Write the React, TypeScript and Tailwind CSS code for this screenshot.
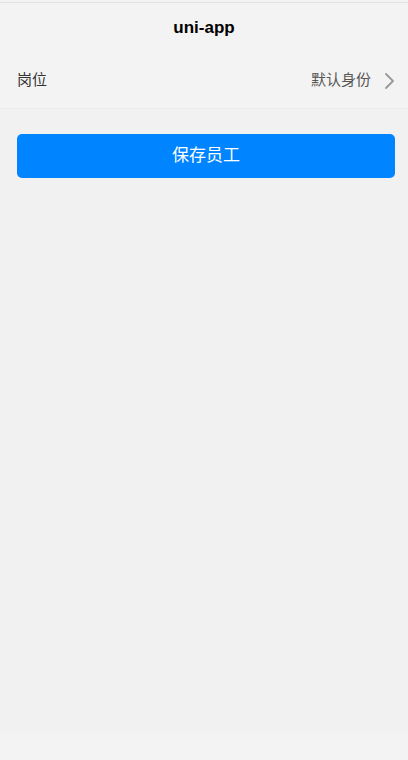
export default function App() {
  return (
    <div
      className="w-[408px] h-[760px] flex flex-col bg-[#f1f1f1]"
      style={{ fontFamily: '"Liberation Sans", "Noto Sans CJK SC", sans-serif' }}
    >
      <div className="h-[3px] border-b border-[#e2e2e2] bg-[#f3f3f3]" />
      <header className="h-[50px] flex items-center justify-center bg-[#f3f3f3]">
        <span className="text-[17px] font-bold text-black">uni-app</span>
      </header>

      <div className="flex items-center justify-between h-[56px] pl-[17px] pr-[14px] border-b border-[#ececec] bg-[#f3f3f3]">
        <span className="text-[15px] text-[#333]">岗位</span>
        <div className="flex items-center gap-[14px]">
          <span className="text-[15px] text-[#555]">默认身份</span>
          <svg width="9" height="16" viewBox="0 0 9 16" fill="none">
            <polyline
              points="1,1 8,8 1,15"
              stroke="#999"
              strokeWidth="1.8"
              strokeLinecap="round"
              strokeLinejoin="round"
            />
          </svg>
        </div>
      </div>

      <div className="pl-[17px] pr-[13px] pt-[25px]">
        <button
          type="button"
          className="w-full h-[44px] rounded-[5px] bg-[#0084ff] text-white text-[17px] flex items-center justify-center"
        >
          保存员工
        </button>
      </div>

      <div className="flex-1" />
      <div className="h-[27px] bg-[#f3f3f3]" />
    </div>
  );
}
